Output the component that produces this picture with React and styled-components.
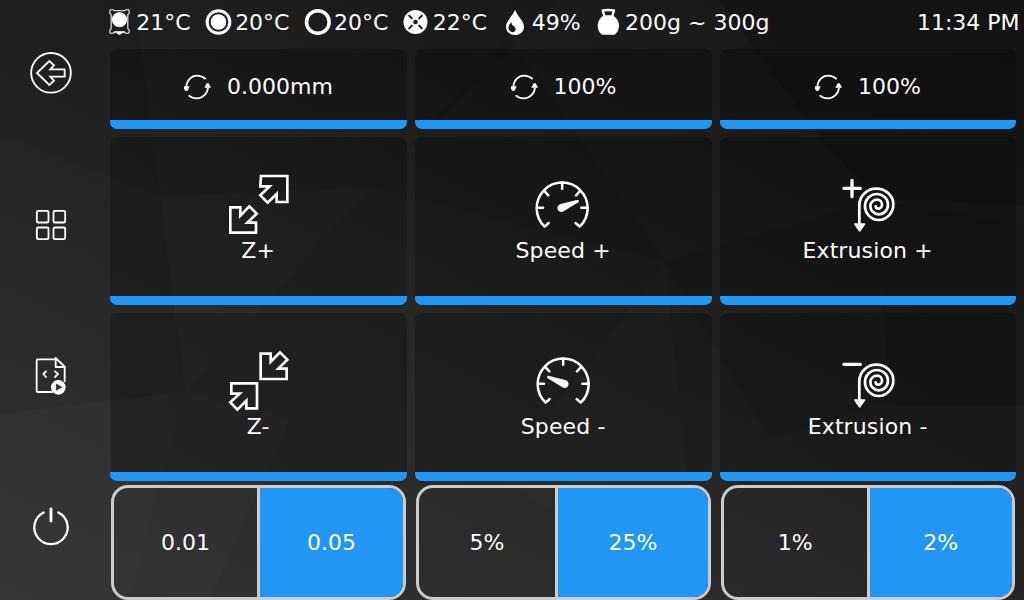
import React from "react";
import styled, { createGlobalStyle } from "styled-components";

const GlobalStyle = createGlobalStyle`
  * { box-sizing: border-box; }
  html, body { margin: 0; background: #1c1c1c; }
  body { overflow: hidden; }
`;

const Screen = styled.div`
  position: relative;
  isolation: isolate;
  width: 1024px;
  height: 600px;
  display: flex;
  overflow: hidden;
  color: #fff;
  font: 22px/26px "DejaVu Sans", sans-serif;
  background: linear-gradient(27deg, #333 0%, #2e2e2e 20%, #272727 43%, #1d1d1d 70%, #161616 100%);
`;

const Wallpaper = styled.svg`
  position: absolute;
  inset: 0;
  z-index: -1;
`;

const Sidebar = styled.nav`
  width: 102px;
  padding-top: 49px;
  display: flex;
  flex-direction: column;
  align-items: center;
  gap: 103px;
`;

const NavButton = styled.button`
  display: flex;
  width: 48px;
  height: 48px;
  padding: 0;
  border: 0;
  background: none;
  color: inherit;
`;

const Main = styled.main`
  flex: 1;
  display: flex;
  flex-direction: column;
`;

const StatusBar = styled.header`
  height: 49px;
  padding: 0 4.4px 5px 2.9px;
  display: flex;
  align-items: center;
  gap: 13.1px;
  white-space: nowrap;
`;

const Reading = styled.div`
  display: flex;
  align-items: center;
  gap: 3.4px;
`;

const Value = styled.span`
  padding-top: 2px;
`;

const Clock = styled.time`
  margin-left: auto;
  padding-top: 2px;
`;

const Grid = styled.section`
  margin: 0 8px;
  display: grid;
  grid-template-columns: 297px 297px 296px;
  grid-template-rows: 80px 168px 168px;
  gap: 8px;
`;

const Tile = styled.button`
  display: flex;
  flex-direction: ${(p) => (p.$stacked ? "column" : "row")};
  align-items: center;
  justify-content: ${(p) => (p.$stacked ? "flex-start" : "center")};
  gap: ${(p) => (p.$stacked ? "2px" : "15px")};
  padding: ${(p) => (p.$stacked ? "35px 0.8px 0 0" : "3px 0 8px")};
  border: 0;
  border-radius: 7px;
  color: inherit;
  font: inherit;
  letter-spacing: ${(p) => (p.$stacked ? "0.12px" : "0")};
  background: linear-gradient(to top, #2196f3 9px, rgba(0, 0, 0, 0.25) 9px);
`;

const Selectors = styled.section`
  margin: 4px 8px 0;
  display: grid;
  grid-template-columns: 297px 297px 296px;
  gap: 8px;
`;

const Segmented = styled.div`
  height: 115px;
  margin: 0 1px;
  display: flex;
  overflow: hidden;
  border: 3px solid #ccc;
  border-radius: 17px;
`;

const Segment = styled.button`
  flex: 1 1 auto;
  padding: 0;
  border: 0;
  color: inherit;
  font: inherit;
  background: ${(p) => (p.$active ? "#2196f3" : "transparent")};

  & + & {
    border-left: 3px solid #ccc;
  }
`;

const Glyph = styled.svg`
  flex: none;
  width: ${(p) => p.$size}px;
  height: ${(p) => p.$size}px;
  fill: none;
  stroke: currentColor;
  stroke-width: ${(p) => p.$weight || 7.5};
  stroke-linecap: round;
  stroke-linejoin: round;
`;

const BedIcon = () => (
  <Glyph $size={28} $weight={3.2} viewBox="13.5 24 84 84">
    <path d="M31 29h6l5 3h30l5-3h6l3 3v8l-4 4v42l4 5v6l-3 3h-7l-5-5H43l-5 5h-7l-3-3v-6l4-5V44l-4-4v-8z" />
    <path d="M42 97h30M50 100h14M55 103h4" />
    <circle cx="57" cy="59" r="21" fill="currentColor" />
  </Glyph>
);
const NozzleIcon = () => (
  <Glyph $size={28} $weight={9} viewBox="310.5 24 84 84">
    <circle cx="354" cy="66" r="34" />
    <circle cx="354" cy="66" r="23.500" fill="currentColor" stroke="none" />
  </Glyph>
);
const RingIcon = () => (
  <Glyph $size={28} $weight={10.5} viewBox="607.5 24 84 84">
    <circle cx="652" cy="66" r="34" />
  </Glyph>
);
const FanIcon = () => (
  <Glyph $size={28} $weight={6} viewBox="34.5 24 84 84">
    <circle cx="78" cy="66" r="36" fill="currentColor" stroke="none" />
    <g stroke="#1b1b1b">
      <path d="M59 47l8 8M97 47l-8 8M59 85l8-8M97 85l-8-8" />
      <circle cx="78" cy="66" r="4" fill="#1b1b1b" />
    </g>
  </Glyph>
);
const DropIcon = () => (
  <Glyph $size={28} viewBox="330 24 84 84">
    <path d="M375 29C368 48 348 63 348 80c0 15 12 25 27 25s27-10 27-25c0-17-20-32-27-51z" fill="currentColor" stroke="none" />
    <path d="M364 66c-7 8-10 14-8 21 2 6 7 10 14 10 10-5 8-12 2-18-6-5-8-8-8-13z" fill="#1b1b1b" stroke="none" />
  </Glyph>
);
const WeightIcon = () => (
  <Glyph $size={28} viewBox="611 24 84 84">
    <path d="M642 48l-5-17q17-2 34 0l-5 17" strokeWidth="7" />
    <path d="M642 46h24c12 6 20 18 20 31 0 12-5 21-13 27h-38c-8-6-13-15-13-27 0-13 8-25 20-31z" fill="currentColor" stroke="none" />
  </Glyph>
);
const RefreshIcon = () => (
  <Glyph $size={28} $weight={5.2} viewBox="252 219 84 84">
    <path d="M259 260c1-19 15-33 32-33 10 0 19 4 26 10M324 262c-1 19-16 33-33 33-10 0-18-3-25-9" strokeLinecap="butt" />
    <path d="M249 259h20l-6 13h-8zM313 263h20l-7-13h-6z" fill="currentColor" stroke="none" />
  </Glyph>
);

const BackIcon = () => (
  <Glyph $size={48} $weight={5.5} viewBox="81 57 144 144">
    <circle cx="153" cy="128.5" r="59.5" />
    <path d="M111 129l37-36 14 13-11 12h43v22h-43l11 12-14 13z" strokeLinejoin="miter" />
  </Glyph>
);
const AppsIcon = () => (
  <Glyph $size={48} $weight={5.5} viewBox="81 510 144 144">
    <rect x="110.500" y="542.500" width="35" height="35" rx="4" />
    <rect x="160.500" y="542.500" width="35" height="35" rx="4" />
    <rect x="110.500" y="592.500" width="35" height="35" rx="4" />
    <rect x="160.500" y="592.500" width="35" height="35" rx="4" />
  </Glyph>
);
const ScriptIcon = () => (
  <Glyph $size={48} $weight={5.5} viewBox="81 63 144 144">
    <path d="M165 88h-51q-4 0-4 4v90q0 4 4 4h42M194 112v42M167 84v27h28M167 84l28 27" />
    <path d="M138 124l-8 8 8 9M165 124l9 8-9 9" />
    <circle cx="175" cy="172" r="22" fill="currentColor" stroke="none" />
    <path d="M169 163v18l16-9z" fill="#2b2b2b" stroke="#2b2b2b" strokeWidth="2" />
  </Glyph>
);
const PowerIcon = () => (
  <Glyph $size={48} $weight={7} viewBox="81 516 144 144">
    <path d="M131 547.5A50 50 0 1 0 175 547.5" />
    <path d="M153 537v36" strokeWidth="8.5" />
  </Glyph>
);

const ZPlusIcon = () => (
  <Glyph $size={64} $weight={8} viewBox="78 36 192 192">
    <path d="M183 48h79v78h-32v-24l-27 26-22-22 28-27h-28z" strokeLinejoin="miter" />
    <path d="M91 142h30v25l27-28 22 22-28 27h26v30H91z" strokeLinejoin="miter" />
  </Glyph>
);
const ZMinusIcon = () => (
  <Glyph $size={64} $weight={8} viewBox="78 38 192 192">
    <path d="M182 55h30v24l28-28 22 22-27 27h25v31h-78z" strokeLinejoin="miter" />
    <path d="M94 144h77v75h-32v-23l-27 27-21-22 28-26H94z" strokeLinejoin="miter" />
  </Glyph>
);

const Dial = () => (
  <>
    <path d="M147 189l-12 11A76.5 76.5 0 1 1 240 200l-12-11" />
    <path d="M187.500 68v18M112 143h18M263 143h-18M134 93l12 13M241 93l-12 13" />
  </>
);
const SpeedPlusIcon = () => (
  <Glyph $size={64} viewBox="94 36 192 192">
    <Dial />
    <path d="M183 132l51-13q7 2 2 8l-44 27c-8 4-16 1-18-6-2-7 2-14 9-16z" fill="currentColor" stroke="none" />
  </Glyph>
);
const SpeedMinusIcon = () => (
  <Glyph $size={64} viewBox="91 36 192 192">
    <Dial />
    <path d="M194 132l-51-13q-7 2-2 8l44 27c8 4 16 1 18-6 2-7-2-14-9-16z" fill="currentColor" stroke="none" />
  </Glyph>
);

const Filament = () => (
  <>
    <path
      strokeWidth="8.2"
      d="M206 192V136A51 50 0 0 1 257 86A51 47 0 0 1 308 133A44 47 0 0 1 264 180A41 42 0 0 1 223 138A36 36 0 0 1 259 102A33 32 0 0 1 292 134A28 29 0 0 1 264 163A25 26 0 0 1 239 137A21 18 0 0 1 260 119A14 15 0 0 1 274 134A12 12 0 0 1 262 146Q256 146 255 139"
    />
    <path d="M192 192h30l-15 21z" fill="currentColor" strokeWidth="4" />
  </>
);
const ExtrudePlusIcon = () => (
  <Glyph $size={64} viewBox="136 36 192 192">
    <path d="M160 85h49M184 61v49" strokeWidth="10" />
    <Filament />
  </Glyph>
);
const ExtrudeMinusIcon = () => (
  <Glyph $size={64} viewBox="136 36 192 192">
    <path d="M160 85h49" strokeWidth="10" />
    <Filament />
  </Glyph>
);

const readings = [
  [BedIcon, "21°C"],
  [NozzleIcon, "20°C"],
  [RingIcon, "20°C"],
  [FanIcon, "22°C"],
  [DropIcon, "49%"],
  [WeightIcon, "200g ~ 300g"],
];

const navItems = [
  ["Back", BackIcon],
  ["Apps", AppsIcon],
  ["Scripts", ScriptIcon],
  ["Power", PowerIcon],
];

const adjustments = [
  [ZPlusIcon, "Z+"],
  [SpeedPlusIcon, "Speed +"],
  [ExtrudePlusIcon, "Extrusion +"],
  [ZMinusIcon, "Z-"],
  [SpeedMinusIcon, "Speed -"],
  [ExtrudeMinusIcon, "Extrusion -"],
];

const steps = [
  ["0.01", "0.05"],
  ["5%", "25%"],
  ["1%", "2%"],
];

export default function App() {
  return (
    <Screen>
      <GlobalStyle />
      <Wallpaper width="1024" height="600" viewBox="0 0 1024 600" aria-hidden="true">
        <g fill="#000">
          <path d="M0 0H135L160 197L0 135Z" opacity=".1" />
          <path d="M135 0H560L370 187L160 197Z" opacity=".04" />
          <path d="M510 36L665 262L370 187Z" opacity=".04" />
          <path d="M718 0H1024V205L875 200L820 137Z" opacity=".12" />
          <path d="M665 262L875 200L890 402L770 440Z" opacity=".06" />
          <path d="M0 135L160 197L185 392L0 414Z" opacity=".03" />
          <path d="M875 200L1024 225V405H890Z" opacity=".1" />
        </g>
        <g fill="#fff">
          <path d="M160 197L370 187L185 392Z" opacity=".01" />
          <path d="M0 414L185 392L130 600H0Z" opacity=".015" />
          <path d="M665 262L500 480L700 600Z" opacity=".01" />
          <path d="M185 392L290 420L210 600H130Z" opacity=".01" />
        </g>
      </Wallpaper>
      <Sidebar>
        {navItems.map(([name, Icon]) => (
          <NavButton key={name} aria-label={name}>
            <Icon />
          </NavButton>
        ))}
      </Sidebar>
      <Main>
        <StatusBar>
          {readings.map(([Icon, value], i) => (
            <Reading key={i}>
              <Icon />
              <Value>{value}</Value>
            </Reading>
          ))}
          <Clock>11:34 PM</Clock>
        </StatusBar>
        <Grid>
          {["0.000mm", "100%", "100%"].map((value, i) => (
            <Tile key={i}>
              <RefreshIcon />
              {value}
            </Tile>
          ))}
          {adjustments.map(([Icon, label]) => (
            <Tile key={label} $stacked>
              <Icon />
              {label}
            </Tile>
          ))}
        </Grid>
        <Selectors>
          {steps.map((options) => (
            <Segmented key={options[0]}>
              {options.map((option, i) => (
                <Segment key={option} $active={i === 1}>
                  {option}
                </Segment>
              ))}
            </Segmented>
          ))}
        </Selectors>
      </Main>
    </Screen>
  );
}
